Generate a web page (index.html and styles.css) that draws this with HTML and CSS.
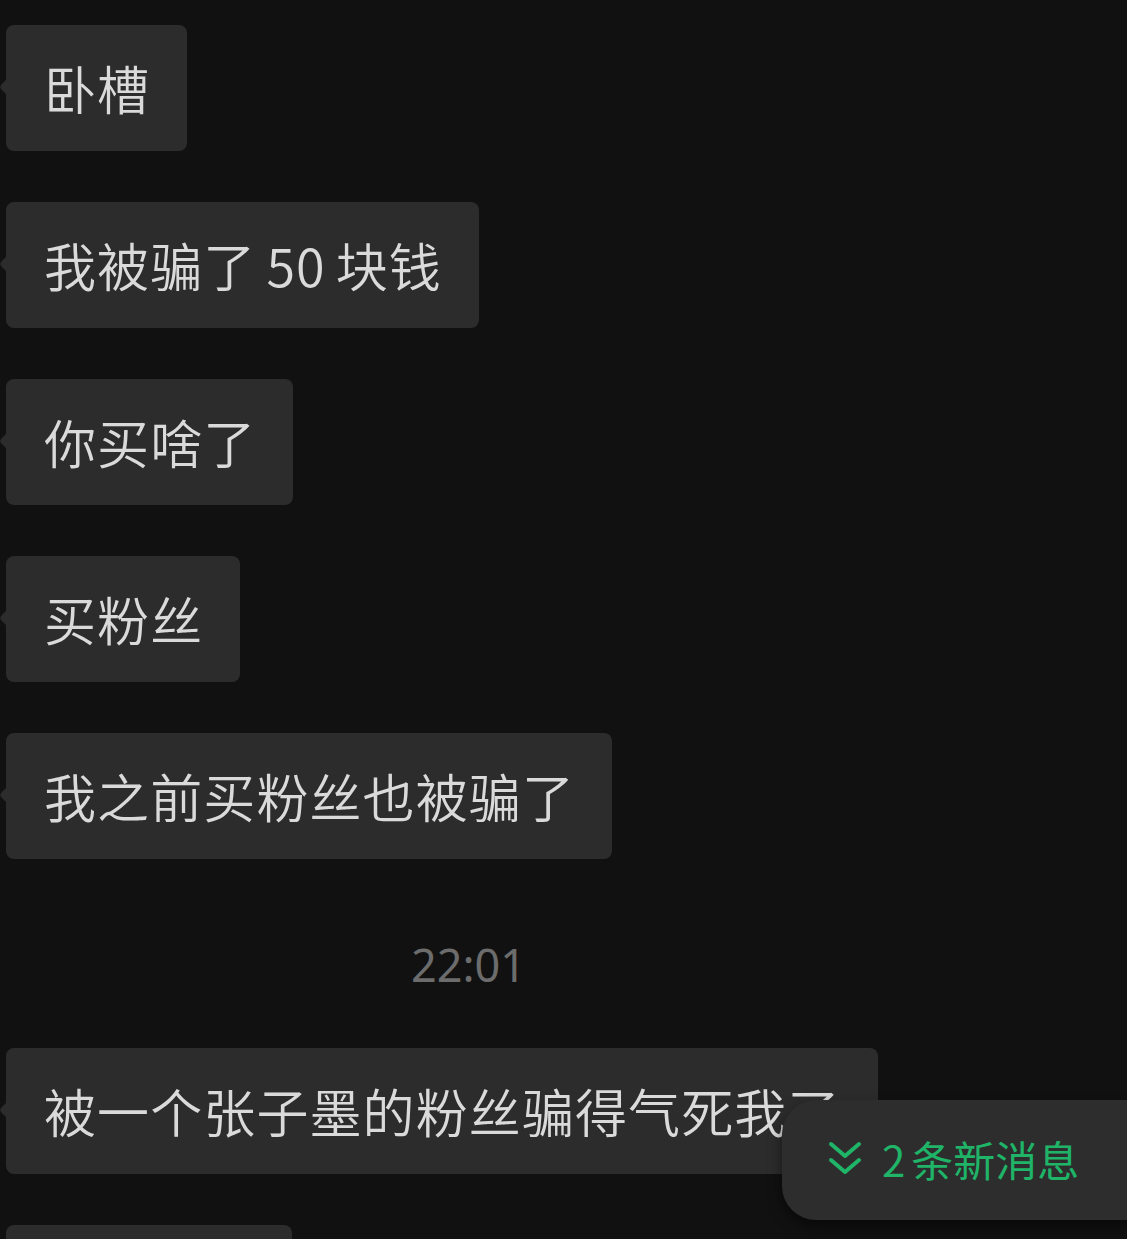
FILE: index.html
```html
<!DOCTYPE html>
<html lang="zh-CN">
<head>
    <meta charset="UTF-8">
    <meta name="viewport" content="width=device-width, initial-scale=1.0">
    <title>聊天</title>
    <link rel="stylesheet" href="styles.css">
</head>
<body>
    <div class="chat">
        <div class="bubble">卧槽</div>
        <div class="bubble">我被骗了<span class="num">50</span>块钱</div>
        <div class="bubble">你买啥了</div>
        <div class="bubble">买粉丝</div>
        <div class="bubble">我之前买粉丝也被骗了</div>
        <div class="time">22:01</div>
        <div class="bubble">被一个张子墨的粉丝骗得气死我了</div>
        <div class="bubble bubble-cut"></div>
    </div>

    <div class="new-msgs">
        <svg class="chevrons" width="34" height="36" viewBox="0 0 34 36">
            <path d="M3 3 L17 15 L31 3" fill="none" stroke="#1fb468" stroke-width="4" stroke-linecap="round" stroke-linejoin="round"/>
            <path d="M3 19 L17 31 L31 19" fill="none" stroke="#1fb468" stroke-width="4" stroke-linecap="round" stroke-linejoin="round"/>
        </svg>
        <span><span class="count">2</span>条新消息</span>
    </div>
</body>
</html>
```
FILE: styles.css
```css
body {
    margin: 0;
    padding: 0;
    background-color: #111111;
    font-family: "Noto Sans CJK SC", "Noto Sans", sans-serif;
    overflow: hidden;
    height: 1239px;
}
.chat {
    display: flex;
    flex-direction: column;
    align-items: flex-start;
    gap: 51px;
    padding: 25px 0 0 6px;
}
.bubble {
    position: relative;
    background-color: #2c2c2c;
    color: #dadada;
    font-size: 52px;
    font-weight: 350;
    letter-spacing: 1.1px;
    line-height: 66px;
    padding: 30px 37px 30px 38px;
    border-radius: 8px;
    white-space: nowrap;
}
.bubble::before {
    content: "";
    position: absolute;
    left: -3px;
    top: 52px;
    width: 20px;
    height: 20px;
    background-color: #2c2c2c;
    border-radius: 4px;
    transform: rotate(45deg);
}
.bubble-cut {
    width: 211px;
    height: 66px;
}
.num {
    margin: 0 10px;
}
.time {
    align-self: stretch;
    padding: 23px 0 0 405px;
    line-height: 64px;
    font-family: "Noto Sans", sans-serif;
    font-size: 45px;
    color: #6c6c6c;
}
.new-msgs {
    position: absolute;
    top: 1100px;
    left: 782px;
    width: 380px;
    height: 120px;
    box-sizing: border-box;
    padding-left: 46px;
    padding-bottom: 4px;
    display: flex;
    align-items: center;
    gap: 20px;
    background-color: #2d2d2d;
    border-radius: 34px;
    box-shadow: 0 6px 14px rgba(0, 0, 0, 0.5);
    color: #1fb468;
    font-size: 42px;
}
.count {
    margin-right: 6px;
}
.chevrons {
    display: block;
    margin-top: 2px;
}
```
